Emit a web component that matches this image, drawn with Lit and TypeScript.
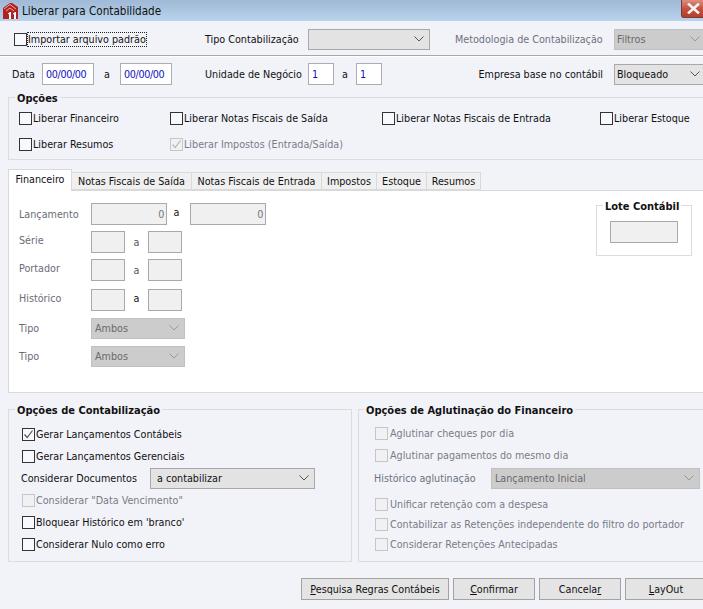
import { LitElement, html, css } from "lit";
import { customElement } from "lit/decorators.js";

const chevron = html`<svg class="chev" width="10" height="6" viewBox="0 0 10 6"><path d="M0.5 0.5 L5 5 L9.5 0.5" fill="none" stroke="currentColor" stroke-width="1"/></svg>`;

@customElement("app-root")
export class AppRoot extends LitElement {
  static styles = css`
    :host { display: block; width: 703px; height: 609px; overflow: hidden; background: #f1f3f9; font-family: "DejaVu Sans", sans-serif; font-stretch: condensed; font-size: 10.7px; color: #111; }
    * { box-sizing: border-box; }
    .title { height: 21px; display: flex; align-items: center; background: linear-gradient(#9fb9d6, #b9d3ec); position: relative; padding-left: 3px; }
    .title span { margin-left: 4px; font-size: 11.6px; color: #111; }
    .close { position: absolute; left: 681px; top: 0; width: 24px; height: 18px; border: 1px solid #7a3a35; border-top: none; border-radius: 0 0 3px 3px; background: linear-gradient(#dc8f80, #c24e3c 55%, #b5402f); display: flex; align-items: center; justify-content: center; }
    .row { display: flex; align-items: center; }
    .r1 { height: 34px; padding: 2px 0 0 14px; }
    .r1 .cell { padding-top: 1px; }
    .sep { height: 2px; background: #a8a8a8; border-bottom: 1px solid #fff; }
    .r2 { height: 22px; margin-top: 6px; padding-left: 12px; }
    .cell { flex: none; }
    .input { flex: none; height: 22px; border: 1px solid #acacb4; background: #fff; color: #1010c0; padding: 0 2px 0 3px; display: flex; align-items: center; letter-spacing: -0.35px; }
    .input.off { background: #f0f0f0; color: #777; justify-content: flex-end; border-color: #a9a9a9; }
    .select { flex: none; height: 21px; border: 1px solid #a8a8a8; background: #e3e3e3; color: #111; display: flex; align-items: center; justify-content: space-between; padding: 0 5px 0 2px; }
    .select.off { background: #cccccc; color: #6a6a6a; border-color: #c0c0c0; }
    .chev { flex: none; color: #555; }
    .select.off .chev { color: #9a9a9a; }
    .dim { color: #6d7180; }
    .ck { display: flex; align-items: center; flex: none; white-space: nowrap; }
    .box { width: 13px; height: 13px; border: 1px solid #333; margin-right: 1px; flex: none; display: flex; align-items: center; justify-content: center; background: #f8f9fd; }
    .ck.off { color: #7b7b88; }
    .ck.off .box { border-color: #c6c6c6; background: #f1f1f4; }
    .focus { outline: 1px dotted #222; }
    .group { border: 1px solid #dcdcdc; position: relative; flex: none; }
    .legend { font-size: 11px; font-weight: 700; background: #f1f3f9; position: absolute; top: -6px; left: 6px; padding: 0 2px; height: 14px; line-height: 14px; white-space: nowrap; }
    .opcoes { margin: 12px 0 0 8px; width: 710px; height: 63px; padding: 14px 0 0 10px; }
    .optrow { display: flex; height: 26px; align-items: flex-start; }
    .tabs { display: flex; margin: 9px 0 0 8px; height: 21px; align-items: flex-end; position: relative; z-index: 1; }
    .tab { height: 18px; border: 1px solid #d9d9d9; border-left: none; background: #f0f0f0; display: flex; align-items: center; justify-content: center; flex: none; white-space: nowrap; }
    .tab.on { height: 22px; margin-bottom: -1px; padding-bottom: 2px; background: #fff; border-left: 1px solid #d9d9d9; border-bottom: none; }
    .panel { margin-left: 8px; width: 710px; height: 203px; border: 1px solid #d9d9d9; background: #fff; display: flex; }
    .fields { width: 587px; padding: 9px 0 0 10px; flex: none; }
    .f { display: flex; align-items: center; height: 28px; color: #6b6b78; }
    .f .lbl { width: 72px; flex: none; }
    .f .lbl.up { padding-bottom: 4px; }
    .f .a { flex: none; width: 23px; text-align: center; color: #555; }
    .f .a.first { color: #111; padding: 0 4px 4px 0; }
    .f .a.dark { color: #111; padding-bottom: 4px; }
    .f .select { width: 94px; padding-left: 3px; }
    .hist { margin-top: 2px; }
    .lote { margin-top: 14px; width: 96px; height: 51px; background: #fff; display: flex; justify-content: center; padding-top: 15px; }
    .lote .legend { background: #fff; }
    .bottom { display: flex; margin-top: 16px; gap: 6px; }
    .gl { margin-left: 8px; width: 344px; height: 153px; padding: 13px 0 0 13px; }
    .gr { width: 350px; height: 153px; padding: 12px 0 0 16px; }
    .gr .legend { left: 5px; }
    .gr .box { margin-right: 2px; }
    .line { height: 22px; display: flex; align-items: center; }
    .doc { margin-left: -1px; }
    .doc .name { width: 129px; }
    .doc .select { width: 165px; padding-left: 6px; }
    .hag { height: 24px; margin: 0 0 4px -1px; color: #6d7180; }
    .hag .name { width: 117px; }
    .hag .select { width: 209px; padding-left: 3px; }
    .short { height: 20px; }
    .buttons { display: flex; margin: 16px 0 0 301px; gap: 4px; }
    .btn { flex: none; width: 82px; height: 22px; border: 1px solid #a3a3a3; background: #e4e4e4; display: flex; align-items: center; justify-content: center; color: #111; }
    .btn.wide { width: 148px; }
  `;

  ck(label: string, state: "" | "on" | "off" | "offon" = "", cls = "", width = 0) {
    const check = state === "on" || state === "offon";
    const stroke = state === "offon" ? "#b8b8b8" : "#555";
    return html`<div class="ck ${state === "off" || state === "offon" ? "off" : ""}" style=${width ? `width:${width}px` : ""}>
      <div class="box">${check ? html`<svg width="11" height="11" viewBox="0 0 11 11"><path d="M1.5 5.5 L4.2 8.5 L9.5 1.5" fill="none" stroke=${stroke} stroke-width="1.2"/></svg>` : ""}</div>
      <span class=${cls}>${label}</span>
    </div>`;
  }

  render() {
    return html`
      <div class="title">
        <svg width="15" height="16" viewBox="0 0 15 16">
          <path d="M0 5 L7 0 L9 0 L15 4 L15 16 L0 16 Z" fill="#b3201f"/>
          <path d="M1 6 L7 1.5 L13 6" fill="none" stroke="#e8b0a8" stroke-width="1"/>
          <path d="M3 8 L7 5 L11 8" fill="none" stroke="#e8b0a8" stroke-width="1"/>
          <path d="M5 10.5 L7 9 L8 9 L8 16 L6 16 L6 11 L5 11.5 Z" fill="#fff"/>
          <path d="M10 10.5 L12 9 L13 9 L13 16 L11 16 L11 11 L10 11.5 Z" fill="#fff"/>
        </svg>
        <span>Liberar para Contabilidade</span>
        <div class="close"><svg width="13" height="11" viewBox="0 0 13 11"><path d="M2 1.5 L11 9.5 M11 1.5 L2 9.5" stroke="#f4f4f4" stroke-width="2.6" stroke-linecap="square" fill="none"/></svg></div>
      </div>

      <div class="row r1">
        <div class="cell" style="width:191px">${this.ck("Importar arquivo padrão", "", "focus")}</div>
        <div class="cell" style="width:103px">Tipo Contabilização</div>
        <div class="select" style="width:122px"><span></span>${chevron}</div>
        <div class="cell dim" style="width:159px;margin-left:25px">Metodologia de Contabilização</div>
        <div class="select off" style="width:92px"><span>Filtros</span>${chevron}</div>
      </div>
      <div class="sep"></div>

      <div class="row r2">
        <div class="cell" style="width:30px">Data</div>
        <div class="input" style="width:52px">00/00/00</div>
        <div class="cell" style="width:26px;text-align:center">a</div>
        <div class="input" style="width:52px">00/00/00</div>
        <div class="cell" style="width:103px;margin-left:33px">Unidade de Negócio</div>
        <div class="input" style="width:26px">1</div>
        <div class="cell" style="width:22px;text-align:center">a</div>
        <div class="input" style="width:26px">1</div>
        <div class="cell" style="width:232px;text-align:right;padding-right:11px">Empresa base no contábil</div>
        <div class="select" style="width:92px"><span>Bloqueado</span>${chevron}</div>
      </div>

      <div class="group opcoes">
        <div class="legend">Opções</div>
        <div class="optrow">
          ${this.ck("Liberar Financeiro", "", "", 151)}
          ${this.ck("Liberar Notas Fiscais de Saída", "", "", 212)}
          ${this.ck("Liberar Notas Fiscais de Entrada", "", "", 218)}
          ${this.ck("Liberar Estoque")}
        </div>
        <div class="optrow">
          ${this.ck("Liberar Resumos", "", "", 151)}
          ${this.ck("Liberar Impostos (Entrada/Saída)", "offon")}
        </div>
      </div>

      <div class="tabs">
        <div class="tab on" style="width:64px">Financeiro</div>
        <div class="tab" style="width:120px">Notas Fiscais de Saída</div>
        <div class="tab" style="width:130px">Notas Fiscais de Entrada</div>
        <div class="tab" style="width:55px">Impostos</div>
        <div class="tab" style="width:50px">Estoque</div>
        <div class="tab" style="width:54px">Resumos</div>
      </div>
      <div class="panel">
        <div class="fields">
          <div class="f"><div class="lbl">Lançamento</div><div class="input off" style="width:76px">0</div><div class="a first">a</div><div class="input off" style="width:76px">0</div></div>
          <div class="f"><div class="lbl up">Série</div><div class="input off" style="width:34px"></div><div class="a">a</div><div class="input off" style="width:34px"></div></div>
          <div class="f"><div class="lbl up">Portador</div><div class="input off" style="width:34px"></div><div class="a">a</div><div class="input off" style="width:34px"></div></div>
          <div class="f hist"><div class="lbl up">Histórico</div><div class="input off" style="width:34px"></div><div class="a dark">a</div><div class="input off" style="width:34px"></div></div>
          <div class="f"><div class="lbl">Tipo</div><div class="select off"><span>Ambos</span>${chevron}</div></div>
          <div class="f"><div class="lbl">Tipo</div><div class="select off"><span>Ambos</span>${chevron}</div></div>
        </div>
        <div class="group lote">
          <div class="legend">Lote Contábil</div>
          <div class="input off" style="width:68px"></div>
        </div>
      </div>

      <div class="bottom">
        <div class="group gl">
          <div class="legend">Opções de Contabilização</div>
          <div class="line">${this.ck("Gerar Lançamentos Contábeis", "on")}</div>
          <div class="line">${this.ck("Gerar Lançamentos Gerenciais")}</div>
          <div class="line doc"><div class="name">Considerar Documentos</div><div class="select"><span>a contabilizar</span>${chevron}</div></div>
          <div class="line">${this.ck('Considerar "Data Vencimento"', "off")}</div>
          <div class="line">${this.ck("Bloquear Histórico em 'branco'")}</div>
          <div class="line">${this.ck("Considerar Nulo como erro")}</div>
        </div>
        <div class="group gr">
          <div class="legend">Opções de Aglutinação do Financeiro</div>
          <div class="line">${this.ck("Aglutinar cheques por dia", "off")}</div>
          <div class="line">${this.ck("Aglutinar pagamentos do mesmo dia", "off")}</div>
          <div class="line hag"><div class="name">Histórico aglutinação</div><div class="select off"><span>Lançamento Inicial</span>${chevron}</div></div>
          <div class="line short">${this.ck("Unificar retenção com a despesa", "off")}</div>
          <div class="line short">${this.ck("Contabilizar as Retenções independente do filtro do portador", "off")}</div>
          <div class="line short">${this.ck("Considerar Retenções Antecipadas", "off")}</div>
        </div>
      </div>

      <div class="buttons">
        <div class="btn wide"><span><u>P</u>esquisa Regras Contábeis</span></div>
        <div class="btn"><span><u>C</u>onfirmar</span></div>
        <div class="btn"><span>Cancela<u>r</u></span></div>
        <div class="btn"><span><u>L</u>ayOut</span></div>
      </div>
    `;
  }
}
